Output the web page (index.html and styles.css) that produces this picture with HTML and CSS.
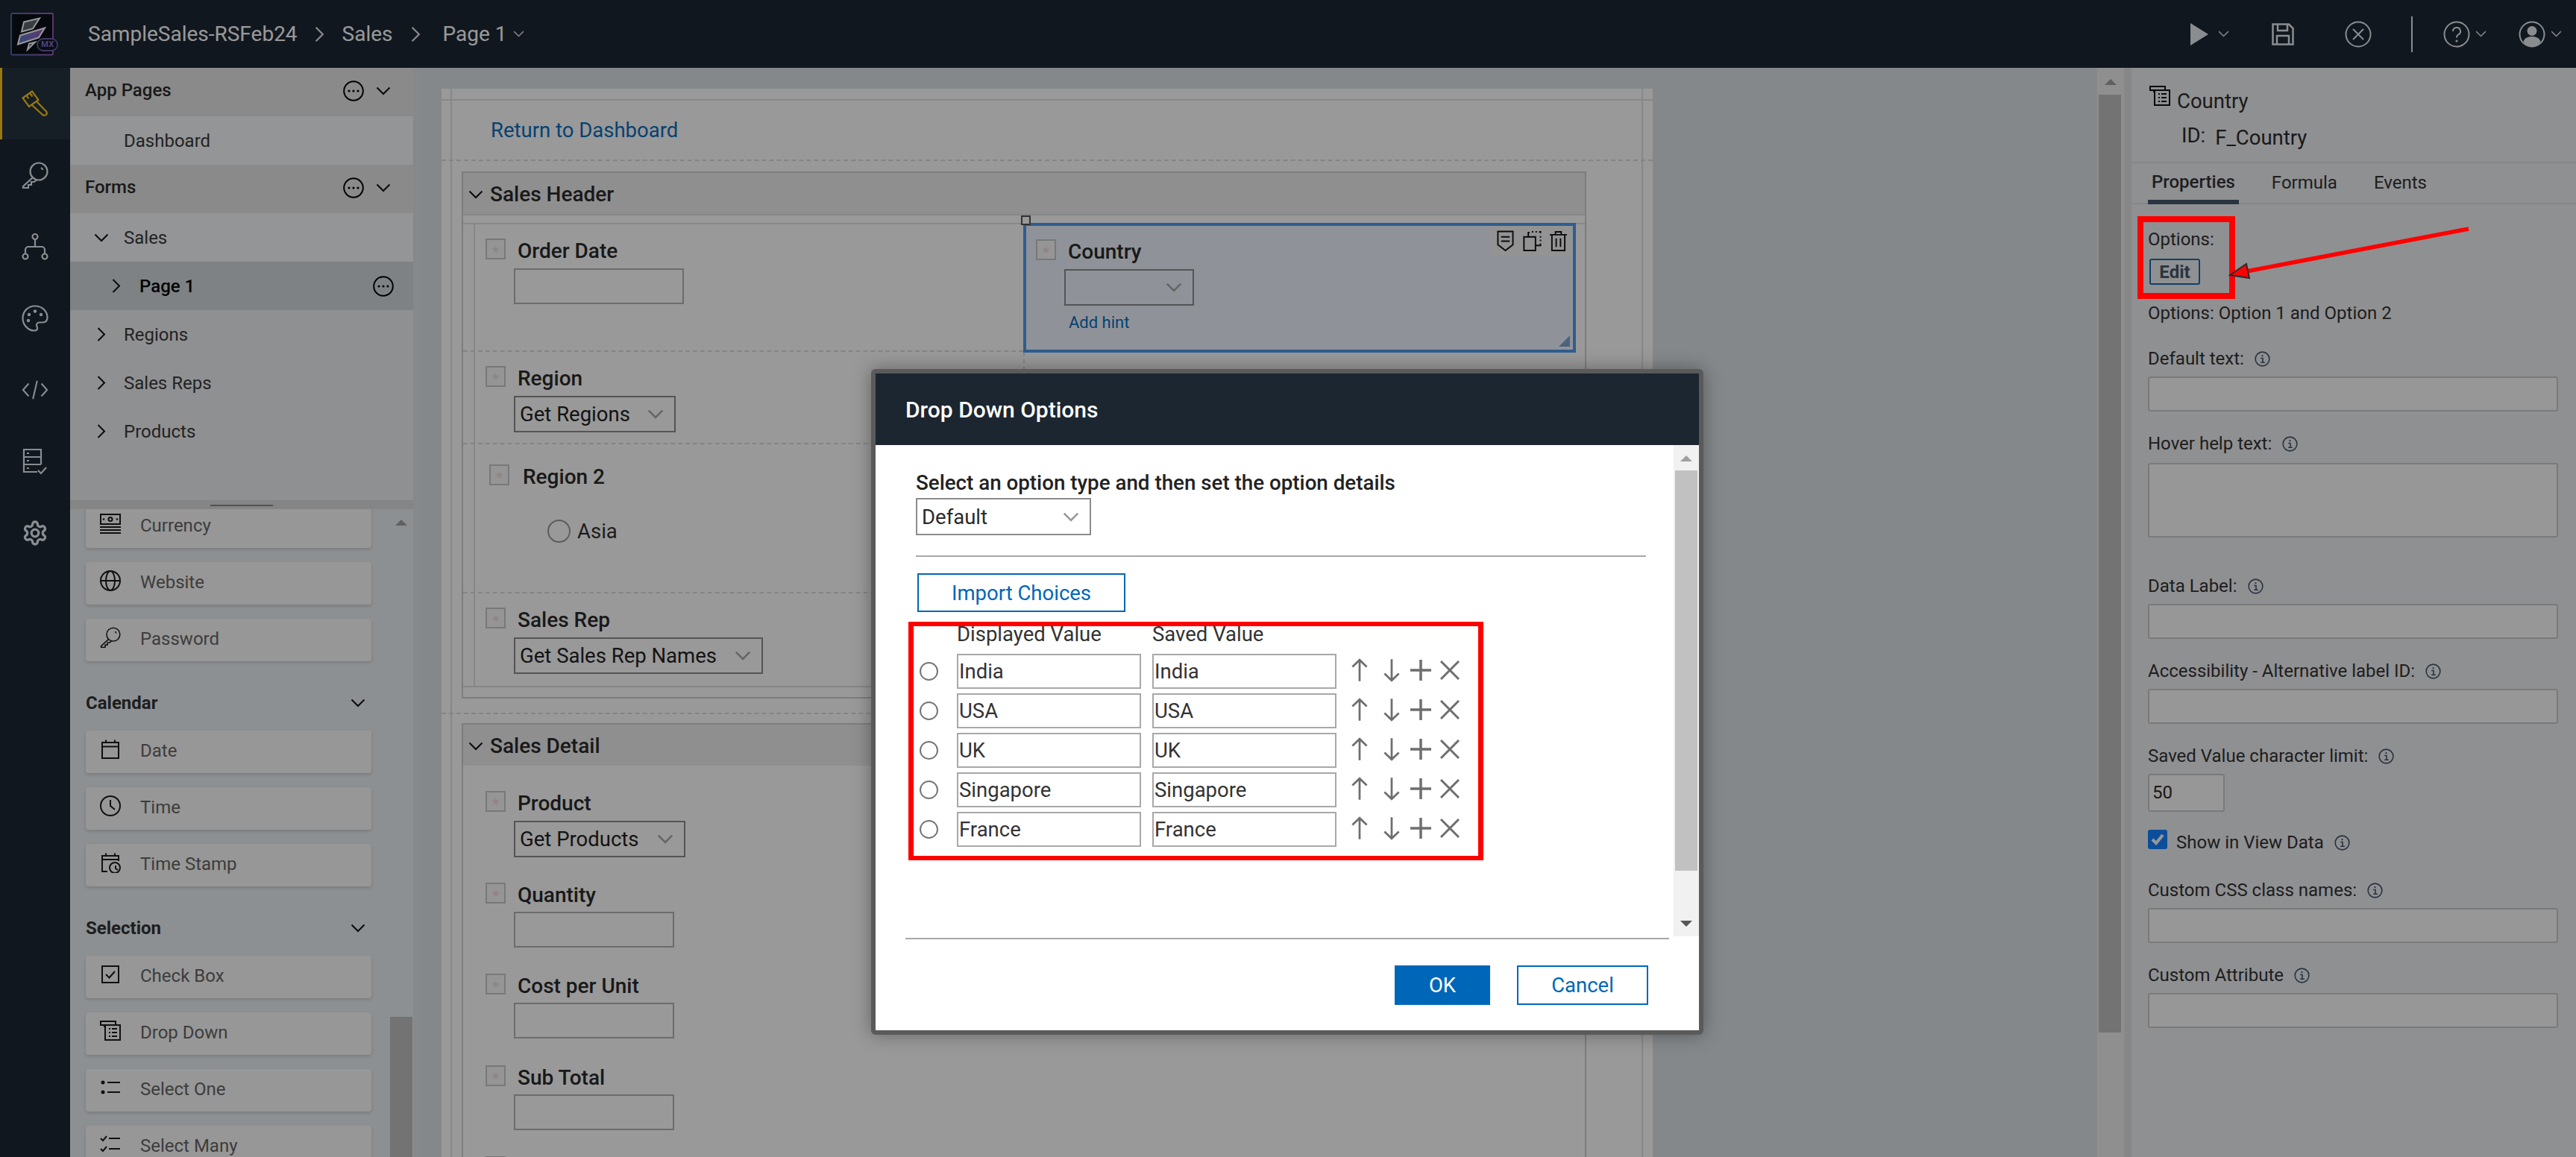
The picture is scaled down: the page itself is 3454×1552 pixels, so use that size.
FILE: index.html
```html
<!DOCTYPE html>
<html lang="en">
<head>
    <meta charset="UTF-8">
    <meta name="viewport" content="width=device-width, initial-scale=1.0">
    <title>Drop Down Options</title>
    <link rel="stylesheet" href="styles.css">
</head>
<body>

<!-- Icon sprite -->
<svg class="sprite" xmlns="http://www.w3.org/2000/svg">
    <symbol id="i-chev-down" viewBox="0 0 20 12"><path d="M1.5 1.5 L10 10 L18.5 1.5"/></symbol>
    <symbol id="i-chev-right" viewBox="0 0 12 20"><path d="M1.5 1.5 L10 10 L1.5 18.5"/></symbol>
    <symbol id="i-more" viewBox="0 0 28 28"><circle cx="14" cy="14" r="12.8"/><circle class="dot" cx="8" cy="14" r="1.6"/><circle class="dot" cx="14" cy="14" r="1.6"/><circle class="dot" cx="20" cy="14" r="1.6"/></symbol>
    <symbol id="i-brush" viewBox="0 0 36 36"><path d="M1.5 10.5 L14 1.5 L22.5 13 L10 22 Z M6.5 7 L9.5 11.5 M11 3.8 L14.5 8.5 M14 20 L27 32 C30 35.5 35 33.5 33.5 29.5 C33 28 32 27.5 31 26.5 L20 15"/></symbol>
    <symbol id="i-key" viewBox="0 0 36 36"><circle cx="23" cy="13" r="11.5"/><path d="M26 8 a3 3 0 0 1 2 3 M15 21 L2 33 V35 H9 V31 H13 V27 H17 L20 24"/></symbol>
    <symbol id="i-tree" viewBox="0 0 36 36"><circle cx="18" cy="4.5" r="3.5"/><circle cx="5" cy="31" r="3.5"/><circle cx="31" cy="31" r="3.5"/><path d="M18 8 V18 M5 27.5 V22 A4 4 0 0 1 9 18 H27 A4 4 0 0 1 31 22 V27.5"/></symbol>
    <symbol id="i-palette" viewBox="0 0 36 36"><path d="M18 1.5 C8 1.5 1.5 9 1.5 18 C1.5 27 9 34.5 17 34.5 C21 34.5 22 32 20.5 29 C19 26 21 23.5 24 23.5 H28 C32 23.5 34.5 21 34.5 16.5 C34.5 8 27 1.5 18 1.5 Z"/><circle class="dot" cx="10" cy="13" r="2.2"/><circle class="dot" cx="18" cy="8.5" r="2.2"/><circle class="dot" cx="26" cy="13" r="2.2"/><circle class="dot" cx="9" cy="21" r="2.2"/></symbol>
    <symbol id="i-code" viewBox="0 0 38 30"><path d="M10 6 L2 15 L10 24 M28 6 L36 15 L28 24 M22 2 L16 28"/></symbol>
    <symbol id="i-forms" viewBox="0 0 34 36"><path d="M20 32 H2 V2 H25 V22 M2 12 H25 M2 22 H25 M6 7 H9 M6 17 H9 M6 27 H9 M21 30 L25 34 L32 26"/></symbol>
    <symbol id="i-gear" viewBox="0 0 24 24"><path d="M12.22 2h-.44a2 2 0 0 0-2 2v.18a2 2 0 0 1-1 1.73l-.43.25a2 2 0 0 1-2 0l-.15-.08a2 2 0 0 0-2.73.73l-.22.38a2 2 0 0 0 .73 2.73l.15.1a2 2 0 0 1 1 1.72v.51a2 2 0 0 1-1 1.74l-.15.09a2 2 0 0 0-.73 2.73l.22.38a2 2 0 0 0 2.73.73l.15-.08a2 2 0 0 1 2 0l.43.25a2 2 0 0 1 1 1.73V20a2 2 0 0 0 2 2h.44a2 2 0 0 0 2-2v-.18a2 2 0 0 1 1-1.73l.43-.25a2 2 0 0 1 2 0l.15.08a2 2 0 0 0 2.73-.73l.22-.39a2 2 0 0 0-.73-2.73l-.15-.08a2 2 0 0 1-1-1.74v-.5a2 2 0 0 1 1-1.74l.15-.09a2 2 0 0 0 .73-2.73l-.22-.38a2 2 0 0 0-2.73-.73l-.15.08a2 2 0 0 1-2 0l-.43-.25a2 2 0 0 1-1-1.73V4a2 2 0 0 0-2-2z"/><circle cx="12" cy="12" r="3.2"/></symbol>
    <symbol id="i-currency" viewBox="0 0 28 28"><rect x="1" y="1" width="26" height="13"/><circle class="dot" cx="5" cy="7.5" r="1.3"/><circle class="dot" cx="23" cy="7.5" r="1.3"/><circle cx="14" cy="7.5" r="2.5"/><path d="M0 18 H28 M0 22 H28 M0 26 H28"/></symbol>
    <symbol id="i-globe" viewBox="0 0 28 28"><circle cx="14" cy="14" r="13"/><ellipse cx="14" cy="14" rx="6" ry="13"/><path d="M1 14 H27"/></symbol>
    <symbol id="i-date" viewBox="0 0 28 28"><path d="M3 5 H25 V26 H3 Z M3 10.5 H25 M8 1.5 V6 M20 1.5 V6"/></symbol>
    <symbol id="i-clock" viewBox="0 0 28 28"><circle cx="14" cy="14" r="13"/><path d="M14 6 V14 L20 19"/></symbol>
    <symbol id="i-stamp" viewBox="0 0 28 28"><path d="M10 26 H3 V5 H25 V12 M3 10 H25 M8 1.5 V6 M20 1.5 V6 M21 18 V22 L24 24"/><circle cx="20" cy="21" r="7"/></symbol>
    <symbol id="i-check" viewBox="0 0 28 28"><path d="M3 3 H25 V25 H3 Z M8 14 L12.5 18.5 L20 10"/></symbol>
    <symbol id="i-dropdown" viewBox="0 0 28 28"><path d="M1 1 H21 V6 H1 Z M6 6 V9 M7 7 V26 H27 V6 H21 M12 11 H14 M12 16 H14 M12 21 H14 M16 11 H23 M16 16 H23 M16 21 H23"/></symbol>
    <symbol id="i-one" viewBox="0 0 28 28"><circle class="dot" cx="4" cy="7" r="2.5"/><circle class="dot" cx="4" cy="20" r="2.5"/><path d="M10 7 H27 M10 20 H27"/></symbol>
    <symbol id="i-many" viewBox="0 0 28 28"><path d="M1 6 L4 9 L9 3 M1 20 L4 23 L9 17 M12 6 H27 M12 20 H27"/></symbol>
    <symbol id="i-info" viewBox="0 0 22 22"><circle cx="11" cy="11" r="9.8"/><path d="M8.5 10 H11.5 V16 M8.5 16 H14.5"/><circle class="dot" cx="11" cy="6.5" r="1.2"/></symbol>
    <symbol id="i-up" viewBox="0 0 24 34"><path d="M12 33 V2 M1.5 12 L12 2 L22.5 12"/></symbol>
    <symbol id="i-down" viewBox="0 0 24 34"><path d="M12 1 V32 M1.5 22 L12 32 L22.5 22"/></symbol>
    <symbol id="i-plus" viewBox="0 0 28 28"><path d="M14 0 V28 M0 14 H28"/></symbol>
    <symbol id="i-x" viewBox="0 0 26 26"><path d="M1 1 L25 25 M25 1 L1 25"/></symbol>
</svg>

<div class="app">

    <!-- Top bar -->
    <header class="topbar">
        <svg class="logo" viewBox="0 0 66 58" xmlns="http://www.w3.org/2000/svg">
            <defs>
                <linearGradient id="logo-line" x1="0" y1="0" x2="1" y2="0"><stop offset="0" stop-color="#4f6fb0"/><stop offset="1" stop-color="#a060c0"/></linearGradient>
                <linearGradient id="logo-band" x1="0" y1="0" x2="1" y2="0"><stop offset="0" stop-color="#6078c8"/><stop offset="1" stop-color="#9a60c0"/></linearGradient>
            </defs>
            <rect x="1" y="1" width="56" height="55.5" rx="1.5" fill="#0b0f16" stroke="url(#logo-line)" stroke-width="1.8"/>
            <path d="M18 12.5 L39 7.5 L30 21.5 L15 25.5 Z" fill="#5c6670"/>
            <path d="M13 30.5 L46 20.5 L38 33.5 L10 42.5 Z" fill="url(#logo-band)"/>
            <path d="M23 49.5 L25 41.5 L33 39.5 Z" fill="#46505a"/>
            <rect x="36" y="35" width="27" height="16" rx="8" fill="#11171f" stroke="#6c5fb0" stroke-width="1.8"/>
        </svg>
        <span class="logo-badge">MX</span>
        <span class="crumb crumb-first">SampleSales-RSFeb24</span>
        <svg class="crumb-sep crumb-sep-first"><use href="#i-chev-right"/></svg>
        <span class="crumb">Sales</span>
        <svg class="crumb-sep"><use href="#i-chev-right"/></svg>
        <span class="crumb">Page 1</span>
        <svg class="top-caret crumb-caret"><use href="#i-chev-down"/></svg>

        <div class="top-actions">
            <svg class="top-play" viewBox="0 0 26 32"><path d="M1 1 L25 16 L1 31 Z"/></svg>
            <svg class="top-caret"><use href="#i-chev-down"/></svg>
            <svg class="top-save" viewBox="0 0 30 30"><path d="M1.5 1.5 H23 L28.5 7 V28.5 H1.5 Z M8 1.5 V10 H21 V1.5 M7 28.5 V17 H23 V28.5"/></svg>
            <svg class="top-close" viewBox="0 0 36 36"><circle cx="18" cy="18" r="16.5"/><path d="M11 11 L25 25 M25 11 L11 25"/></svg>
            <span class="top-divider"></span>
            <svg class="top-help" viewBox="0 0 36 36"><circle cx="18" cy="18" r="16.5"/><path d="M13 14 A5 5 0 1 1 20 18.5 C18.5 19.5 18 20.5 18 22.5"/><circle class="dot" cx="18" cy="27" r="1.6"/></svg>
            <svg class="top-caret"><use href="#i-chev-down"/></svg>
            <svg class="top-user" viewBox="0 0 36 36"><circle cx="18" cy="18" r="16.5"/><circle class="dot" cx="18" cy="13.5" r="6.5"/><path class="dot" d="M6.5 28 C8 23 12 21 18 21 C24 21 28 23 29.5 28 C26 33 22 34.5 18 34.5 C14 34.5 10 33 6.5 28 Z"/></svg>
            <svg class="top-caret"><use href="#i-chev-down"/></svg>
        </div>
    </header>

    <div class="workspace">

        <!-- Icon rail -->
        <nav class="rail">
            <a class="rail-item rail-active"><svg class="rail-icon"><use href="#i-brush"/></svg></a>
            <a class="rail-item"><svg class="rail-icon"><use href="#i-key"/></svg></a>
            <a class="rail-item"><svg class="rail-icon"><use href="#i-tree"/></svg></a>
            <a class="rail-item"><svg class="rail-icon"><use href="#i-palette"/></svg></a>
            <a class="rail-item"><svg class="rail-icon"><use href="#i-code"/></svg></a>
            <a class="rail-item"><svg class="rail-icon"><use href="#i-forms"/></svg></a>
            <a class="rail-item"><svg class="rail-icon"><use href="#i-gear"/></svg></a>
        </nav>

        <!-- Left panel: page tree and toolbox -->
        <aside class="left-panel">
            <div class="tree">
                <div class="tree-head">
                    <span class="tree-head-text">App Pages</span>
                    <svg class="icon-more"><use href="#i-more"/></svg>
                    <svg class="icon-chev"><use href="#i-chev-down"/></svg>
                </div>
                <div class="tree-row tree-row-light"><span class="tree-label">Dashboard</span></div>
                <div class="tree-head">
                    <span class="tree-head-text">Forms</span>
                    <svg class="icon-more"><use href="#i-more"/></svg>
                    <svg class="icon-chev"><use href="#i-chev-down"/></svg>
                </div>
                <div class="tree-row tree-row-light">
                    <svg class="tree-toggle-down"><use href="#i-chev-down"/></svg>
                    <span class="tree-label">Sales</span>
                </div>
                <div class="tree-row tree-row-selected">
                    <svg class="tree-toggle tree-toggle-child"><use href="#i-chev-right"/></svg>
                    <span class="tree-label-child">Page 1</span>
                    <svg class="icon-more icon-more-row"><use href="#i-more"/></svg>
                </div>
                <div class="tree-row"><svg class="tree-toggle"><use href="#i-chev-right"/></svg><span class="tree-label">Regions</span></div>
                <div class="tree-row"><svg class="tree-toggle"><use href="#i-chev-right"/></svg><span class="tree-label">Sales Reps</span></div>
                <div class="tree-row"><svg class="tree-toggle"><use href="#i-chev-right"/></svg><span class="tree-label">Products</span></div>
            </div>
            <div class="splitter"><span class="splitter-handle"></span></div>
            <div class="toolbox">
                <div class="tool-list">
                    <div class="tool-card"><svg class="tool-icon"><use href="#i-currency"/></svg>Currency</div>
                    <div class="tool-card"><svg class="tool-icon"><use href="#i-globe"/></svg>Website</div>
                    <div class="tool-card"><svg class="tool-icon"><use href="#i-key"/></svg>Password</div>
                    <div class="tool-title">Calendar<svg class="icon-chev"><use href="#i-chev-down"/></svg></div>
                    <div class="tool-card"><svg class="tool-icon"><use href="#i-date"/></svg>Date</div>
                    <div class="tool-card"><svg class="tool-icon"><use href="#i-clock"/></svg>Time</div>
                    <div class="tool-card"><svg class="tool-icon"><use href="#i-stamp"/></svg>Time Stamp</div>
                    <div class="tool-title">Selection<svg class="icon-chev"><use href="#i-chev-down"/></svg></div>
                    <div class="tool-card"><svg class="tool-icon"><use href="#i-check"/></svg>Check Box</div>
                    <div class="tool-card"><svg class="tool-icon"><use href="#i-dropdown"/></svg>Drop Down</div>
                    <div class="tool-card"><svg class="tool-icon"><use href="#i-one"/></svg>Select One</div>
                    <div class="tool-card"><svg class="tool-icon"><use href="#i-many"/></svg>Select Many</div>
                </div>
                <div class="tool-scroll">
                    <span class="arrow-up"></span>
                    <span class="tool-thumb"></span>
                </div>
            </div>
        </aside>

        <!-- Form canvas -->
        <main class="canvas">
            <div class="page">
                <div class="page-top"></div>
                <div class="page-link-row"><a class="page-link">Return to Dashboard</a></div>

                <section class="section">
                    <div class="section-head"><svg class="icon-chev"><use href="#i-chev-down"/></svg>Sales Header</div>
                    <div class="section-strip"></div>
                    <div class="header-grid">
                        <div class="cell">
                            <div class="field-head"><span class="req">★</span><span class="field-label">Order Date</span></div>
                            <div class="input-box input-order"></div>
                        </div>
                        <div class="cell cell-selected">
                            <span class="cell-handle"></span>
                            <div class="cell-tools">
                                <svg class="cell-tool" viewBox="0 0 24 30"><path d="M1.5 1.5 H22.5 V20 L12 28 L1.5 20 Z M6 9 H18 M6 15 H18"/></svg>
                                <svg class="cell-tool cell-tool-wide" viewBox="0 0 28 30"><path d="M3 9 H19 V28 H3 Z M9 9 V3 H11 M14 2 H16 M19 2 H21 M24 2 H26 V4 M26 8 V10 M26 13 V15 M26 18 V21 H19"/></svg>
                                <svg class="cell-tool" viewBox="0 0 24 30"><path d="M0 6 H24 M8 6 V2 H16 V6 M3 6 V28 H21 V6 M9 11 V23 M15 11 V23"/></svg>
                            </div>
                            <div class="field-head"><span class="req">★</span><span class="field-label">Country</span></div>
                            <div class="select-box select-country"><svg class="select-chev"><use href="#i-chev-down"/></svg></div>
                            <a class="add-hint">Add hint</a>
                            <span class="cell-resize"></span>
                        </div>
                        <div class="cell">
                            <div class="field-head"><span class="req">★</span><span class="field-label">Region</span></div>
                            <div class="select-box select-region">Get Regions<svg class="select-chev"><use href="#i-chev-down"/></svg></div>
                        </div>
                        <div class="cell cell-side"></div>
                        <div class="cell cell-region2">
                            <div class="field-head field-head-wide"><span class="req">★</span><span class="field-label">Region 2</span></div>
                            <div class="radio-line"><span class="radio radio-big"></span>Asia</div>
                        </div>
                        <div class="cell cell-side"></div>
                        <div class="cell cell-last">
                            <div class="field-head"><span class="req">★</span><span class="field-label">Sales Rep</span></div>
                            <div class="select-box select-rep">Get Sales Rep Names<svg class="select-chev"><use href="#i-chev-down"/></svg></div>
                        </div>
                        <div class="cell cell-side cell-last"></div>
                    </div>
                </section>

                <div class="page-divider"></div>

                <section class="section section-detail">
                    <div class="section-head"><svg class="icon-chev"><use href="#i-chev-down"/></svg>Sales Detail</div>
                    <div class="detail-rows">
                        <div class="detail-row">
                            <div class="field-head"><span class="req">★</span><span class="field-label">Product</span></div>
                            <div class="select-box select-product">Get Products<svg class="select-chev"><use href="#i-chev-down"/></svg></div>
                        </div>
                        <div class="detail-row">
                            <div class="field-head"><span class="req">★</span><span class="field-label">Quantity</span></div>
                            <div class="input-box input-detail"></div>
                        </div>
                        <div class="detail-row">
                            <div class="field-head"><span class="req">★</span><span class="field-label">Cost per Unit</span></div>
                            <div class="input-box input-detail"></div>
                        </div>
                        <div class="detail-row">
                            <div class="field-head"><span class="req">★</span><span class="field-label">Sub Total</span></div>
                            <div class="input-box input-detail"></div>
                        </div>
                        <div class="detail-row">
                            <div class="field-head"><span class="req"></span></div>
                        </div>
                    </div>
                </section>
            </div>
        </main>

        <div class="canvas-scroll">
            <span class="arrow-up"></span>
            <span class="canvas-thumb"></span>
        </div>
        <div class="gutter"></div>

        <!-- Properties panel -->
        <aside class="props">
            <div class="props-head">
                <div class="props-title"><svg class="props-icon"><use href="#i-dropdown"/></svg><span class="props-name">Country</span></div>
                <div class="props-id"><span>ID:</span><span class="props-id-value">F_Country</span></div>
            </div>
            <div class="tabs">
                <span class="tab tab-active">Properties</span>
                <span class="tab">Formula</span>
                <span class="tab">Events</span>
            </div>
            <div class="props-body">
                <div class="prop-label prop-first">Options:</div>
                <button class="edit-btn">Edit</button>
                <div class="prop-note">Options: Option 1 and Option 2</div>

                <div class="prop-label prop-gap-first">Default text:<svg class="info"><use href="#i-info"/></svg></div>
                <div class="prop-input"></div>
                <div class="prop-label">Hover help text:<svg class="info"><use href="#i-info"/></svg></div>
                <div class="prop-input prop-textarea"></div>
                <div class="prop-label prop-gap-big">Data Label:<svg class="info"><use href="#i-info"/></svg></div>
                <div class="prop-input"></div>
                <div class="prop-label">Accessibility - Alternative label ID:<svg class="info"><use href="#i-info"/></svg></div>
                <div class="prop-input"></div>
                <div class="prop-label">Saved Value character limit:<svg class="info"><use href="#i-info"/></svg></div>
                <div class="prop-input prop-number">50</div>
                <div class="prop-check">
                    <span class="check-on"><svg viewBox="0 0 26 26"><path d="M6 13 L11 18 L20 7"/></svg></span>
                    <span class="prop-check-text">Show in View Data</span>
                    <svg class="info"><use href="#i-info"/></svg>
                </div>
                <div class="prop-label prop-gap-css">Custom CSS class names:<svg class="info"><use href="#i-info"/></svg></div>
                <div class="prop-input"></div>
                <div class="prop-label">Custom Attribute<svg class="info"><use href="#i-info"/></svg></div>
                <div class="prop-input"></div>
            </div>
        </aside>
    </div>

    <div class="scrim"></div>

    <!-- Modal dialog -->
    <div class="dialog" role="dialog">
        <div class="dialog-head">Drop Down Options</div>
        <div class="dialog-main">
            <div class="dialog-body">
                <div class="dialog-label">Select an option type and then set the option details</div>
                <div class="dialog-select">Default<svg class="select-chev"><use href="#i-chev-down"/></svg></div>
                <div class="dialog-rule"></div>
                <button class="import-btn">Import Choices</button>
                <div class="opt-grid">
                    <span></span><span class="opt-head">Displayed Value</span><span class="opt-head">Saved Value</span><span></span>

                    <span class="radio"></span><div class="opt-input">India</div><div class="opt-input">India</div>
                    <div class="opt-tools"><svg class="opt-arrow"><use href="#i-up"/></svg><svg class="opt-arrow opt-arrow-down"><use href="#i-down"/></svg><svg class="opt-plus"><use href="#i-plus"/></svg><svg class="opt-x"><use href="#i-x"/></svg></div>

                    <span class="radio"></span><div class="opt-input">USA</div><div class="opt-input">USA</div>
                    <div class="opt-tools"><svg class="opt-arrow"><use href="#i-up"/></svg><svg class="opt-arrow opt-arrow-down"><use href="#i-down"/></svg><svg class="opt-plus"><use href="#i-plus"/></svg><svg class="opt-x"><use href="#i-x"/></svg></div>

                    <span class="radio"></span><div class="opt-input">UK</div><div class="opt-input">UK</div>
                    <div class="opt-tools"><svg class="opt-arrow"><use href="#i-up"/></svg><svg class="opt-arrow opt-arrow-down"><use href="#i-down"/></svg><svg class="opt-plus"><use href="#i-plus"/></svg><svg class="opt-x"><use href="#i-x"/></svg></div>

                    <span class="radio"></span><div class="opt-input">Singapore</div><div class="opt-input">Singapore</div>
                    <div class="opt-tools"><svg class="opt-arrow"><use href="#i-up"/></svg><svg class="opt-arrow opt-arrow-down"><use href="#i-down"/></svg><svg class="opt-plus"><use href="#i-plus"/></svg><svg class="opt-x"><use href="#i-x"/></svg></div>

                    <span class="radio"></span><div class="opt-input">France</div><div class="opt-input">France</div>
                    <div class="opt-tools"><svg class="opt-arrow"><use href="#i-up"/></svg><svg class="opt-arrow opt-arrow-down"><use href="#i-down"/></svg><svg class="opt-plus"><use href="#i-plus"/></svg><svg class="opt-x"><use href="#i-x"/></svg></div>
                </div>
            </div>
            <div class="dialog-scroll">
                <span class="arrow-up arrow-light"></span>
                <span class="dialog-thumb"></span>
                <span class="arrow-down"></span>
            </div>
        </div>
        <div class="dialog-foot">
            <button class="btn-ok">OK</button>
            <button class="btn-cancel">Cancel</button>
        </div>
    </div>

    <!-- Red annotations drawn over the screenshot -->
    <div class="mark mark-options"></div>
    <div class="mark mark-rows"></div>
    <svg class="mark-arrow" viewBox="0 0 340 80" xmlns="http://www.w3.org/2000/svg">
        <path d="M322 3 L24 60" stroke="#ff0000" stroke-width="5.5" fill="none"/>
        <path d="M2 65 L24 50 L28 69 Z" fill="#ff0000"/>
    </svg>
</div>

</body>
</html>
```

FILE: styles.css
```css
* {
    box-sizing: border-box;
}
html, body {
    margin: 0;
    padding: 0;
}
body {
    font-family: Roboto, Arial, sans-serif;
    font-size: 24px;
    color: #2b2b2b;
    background-color: #dce3e6;
}
button {
    font-family: inherit;
    cursor: pointer;
}
svg {
    display: block;
    flex: none;
    fill: none;
    stroke: currentColor;
    stroke-width: 2;
}
svg .dot,
symbol .dot {
    fill: currentColor;
    stroke: none;
}
.sprite {
    display: none;
}
.app {
    position: relative;
    width: 3454px;
    height: 1552px;
    overflow: hidden;
}

/* Top bar */
.topbar {
    display: flex;
    align-items: center;
    height: 91px;
    padding-left: 14px;
    background-color: #1c2735;
    color: #ffffff;
    position: relative;
}
.logo {
    width: 66px;
    height: 58px;
}
.logo-badge {
    position: absolute;
    left: 50px;
    top: 52px;
    width: 28px;
    font-size: 11px;
    line-height: 16px;
    font-weight: 700;
    letter-spacing: 0.5px;
    text-align: center;
    color: #8070d8;
}
.crumb {
    font-size: 28px;
}
.crumb-first {
    margin-left: 38px;
}
.crumb-sep {
    width: 13px;
    height: 24px;
    margin: 0 30px 0 24px;
    color: #e8e8e8;
}
.crumb-sep-first {
    margin: 0 24px 0 23px;
}
.top-caret {
    width: 15px;
    height: 9px;
    color: #dddddd;
    stroke-width: 2;
}
.crumb-caret {
    margin-left: 8px;
}
.top-actions {
    display: flex;
    align-items: center;
    margin-left: auto;
    padding-right: 19px;
    color: #e6ebf0;
}
.top-play {
    width: 26px;
    height: 32px;
    fill: currentColor;
    stroke: none;
    margin-right: 12px;
}
.top-save {
    width: 30px;
    height: 30px;
    margin-left: 57px;
    stroke-width: 2.5;
}
.top-close {
    width: 36px;
    height: 36px;
    margin-left: 68px;
}
.top-divider {
    width: 2px;
    height: 48px;
    margin: 0 41px 0 53px;
    background-color: #e6ebf0;
}
.top-help {
    width: 36px;
    height: 36px;
    margin-right: 7px;
}
.top-user {
    width: 36px;
    height: 36px;
    margin: 0 7px 0 43px;
}

.workspace {
    display: flex;
    height: 1461px;
}

/* Icon rail */
.rail {
    width: 94px;
    flex: none;
    background-color: #1c2735;
    color: #e6ebf0;
}
.rail-item {
    display: flex;
    align-items: center;
    justify-content: center;
    height: 96px;
}
.rail-active {
    background-color: #26343f;
    border-left: 3px solid #ffc81e;
    padding-right: 3px;
    color: #ffc81e;
}
.rail-icon {
    width: 36px;
    height: 36px;
    stroke-width: 2.2;
}

/* Left panel */
.left-panel {
    width: 471px;
    flex: none;
    display: flex;
    flex-direction: column;
    background-color: #edf0f3;
    border-right: 11px solid #e2e3e5;
}
.tree {
    height: 580px;
    background-color: #eff1f3;
}
.tree-head {
    display: flex;
    align-items: center;
    height: 65px;
    padding: 0 0 3px 20px;
    background-color: #e6e6e6;
    font-weight: 500;
}
.tree-head-text {
    padding-bottom: 3px;
}
.tree-row {
    display: flex;
    align-items: center;
    position: relative;
    height: 65px;
    color: #3a3a3a;
}
.tree-row-light {
    background-color: #f5f8fb;
}
.tree-row-selected {
    background-color: #d2d9de;
    color: #000000;
    font-weight: 500;
}
.tree-label {
    position: absolute;
    left: 72px;
}
.tree-label-child {
    position: absolute;
    left: 93px;
}
.tree-toggle {
    width: 12px;
    height: 21px;
    margin-left: 36px;
    color: #111111;
}
.tree-toggle-child {
    margin-left: 56px;
}
.tree-toggle-down {
    width: 20px;
    height: 12px;
    margin-left: 32px;
    color: #111111;
}
.icon-more {
    width: 28px;
    height: 28px;
    margin-left: auto;
    color: #000000;
}
.icon-more-row {
    margin-right: 26px;
}
.icon-chev {
    width: 20px;
    height: 12px;
    color: #111111;
}
.tree-head .icon-chev {
    margin: 0 30px 0 16px;
}
.splitter {
    display: flex;
    justify-content: center;
    height: 12px;
    padding-top: 6px;
    background-color: #dedede;
}
.splitter-handle {
    width: 84px;
    height: 2px;
    background-color: #888888;
}
.toolbox {
    flex: 1;
    display: flex;
    min-height: 0;
    background-color: #ecf0f4;
    overflow: hidden;
}
.tool-list {
    width: 428px;
    flex: none;
    margin-top: -5px;
    padding-left: 21px;
}
.tool-card {
    display: flex;
    align-items: center;
    gap: 26px;
    width: 383px;
    height: 57px;
    margin-bottom: 19px;
    padding: 0 0 4px 19px;
    background-color: #fcfcfc;
    border-radius: 4px;
    box-shadow: 0 2px 5px rgba(0, 0, 0, 0.16);
    color: #666666;
}
.tool-icon {
    width: 28px;
    height: 28px;
    margin-top: -4px;
    color: #1c1c1c;
}
.tool-title {
    display: flex;
    align-items: center;
    justify-content: space-between;
    width: 383px;
    height: 74px;
    padding-right: 8px;
    font-weight: 700;
    color: #333333;
}
.tool-scroll {
    flex: 1;
    display: flex;
    flex-direction: column;
    align-items: center;
}
.tool-scroll .arrow-up {
    margin-top: 14px;
}
.tool-thumb {
    width: 30px;
    height: 188px;
    margin-top: auto;
    background-color: #c0c0c0;
}
.arrow-up {
    width: 0;
    height: 0;
    border-left: 8px solid transparent;
    border-right: 8px solid transparent;
    border-bottom: 8px solid #a0a0a0;
}
.arrow-down {
    width: 0;
    height: 0;
    border-left: 8px solid transparent;
    border-right: 8px solid transparent;
    border-top: 8px solid #555555;
}

/* Canvas */
.canvas {
    width: 2247px;
    flex: none;
    padding: 28px 0 0 27px;
    background-color: #dce3e6;
    overflow: hidden;
}
.page {
    width: 1624px;
    min-height: 1500px;
    background-color: #ffffff;
    background-image: linear-gradient(#e2e2e2, #e2e2e2), linear-gradient(#e2e2e2, #e2e2e2);
    background-size: 2px 100%;
    background-position: 12px 0, calc(100% - 13px) 0;
    background-repeat: no-repeat;
}
.page-top {
    height: 16px;
    border-bottom: 2px solid #e2e2e2;
}
.page-link-row {
    display: flex;
    align-items: center;
    height: 81px;
    padding-left: 66px;
    border-bottom: 2px dashed #dddddd;
}
.page-link {
    font-size: 27.5px;
    color: #0a6ebd;
}
.section {
    width: 1508px;
    margin: 14px 0 0 27px;
    padding-bottom: 13px;
    background-color: #ffffff;
    border: 2px solid #d0d0d0;
}
.section-detail {
    margin-top: 12px;
    padding-bottom: 0;
    border-bottom: none;
}
.section-head {
    display: flex;
    align-items: center;
    gap: 9px;
    height: 55px;
    padding: 2px 0 0 7px;
    background-color: #eeeeee;
    font-size: 28px;
    font-weight: 500;
}
.section-strip {
    height: 14px;
    border-top: 2px solid #e0e0e0;
    border-bottom: 2px solid #e0e0e0;
}
.header-grid {
    display: grid;
    grid-template-columns: 751px 741px;
    grid-template-rows: 171px 124px 200px 126px;
    background-image: linear-gradient(#e2e2e2, #e2e2e2);
    background-size: 2px 100%;
    background-position: 14px 0;
    background-repeat: no-repeat;
}
.cell {
    padding: 19px 0 0 30px;
    border-bottom: 2px dashed #dddddd;
}
.cell-side {
    border-left: 2px dashed #dddddd;
    padding: 0;
}
.cell-last {
    border-bottom: 2px solid #e0e0e0;
}
.cell-region2 {
    padding: 27px 0 0 35px;
}
.field-head {
    display: flex;
    gap: 16px;
    height: 28px;
}
.field-head-wide {
    gap: 18px;
}
.req {
    display: flex;
    align-items: center;
    justify-content: center;
    width: 27px;
    height: 28px;
    background-color: #f8f8f8;
    border: 2px solid #c8c8c8;
    font-family: "DejaVu Sans", sans-serif;
    font-size: 14px;
    color: #f2dde0;
}
.field-label {
    padding-top: 2px;
    font-size: 28px;
    line-height: 30px;
    font-weight: 500;
}
.input-box {
    height: 48px;
    margin: 12px 0 0 38px;
    border: 2px solid #b4b4b4;
    background-color: #ffffff;
}
.input-order {
    width: 228px;
}
.input-detail {
    width: 215px;
    margin-top: 11px;
}
.select-box {
    display: flex;
    align-items: center;
    justify-content: space-between;
    height: 49px;
    margin: 12px 0 0 38px;
    padding: 0 14px 0 6px;
    font-size: 27.5px;
    color: #222222;
    background-color: #ffffff;
    border: 2px solid #8c8c8c;
}
.select-chev {
    width: 22px;
    height: 13px;
    color: #aaaaaa;
    stroke-width: 2.5;
}
.select-region {
    width: 217px;
}
.select-rep {
    width: 334px;
}
.select-product {
    width: 230px;
}
.select-country {
    width: 174px;
    justify-content: flex-end;
    background-color: transparent;
}
.radio-line {
    display: flex;
    align-items: center;
    gap: 9px;
    margin: 45px 0 0 78px;
    font-size: 27.5px;
    color: #333333;
}
.radio {
    width: 25px;
    height: 25px;
    border: 2px solid #767676;
    border-radius: 50%;
    background-color: #ffffff;
}
.radio-big {
    width: 31px;
    height: 31px;
    border-color: #9a9a9a;
    background-color: transparent;
}

/* Selected field */
.cell-selected {
    position: relative;
    margin: -2px 0 -1px;
    padding: 18px 0 0 13px;
    background-color: #eef5ff;
    border: 4px solid #4f9bef;
}
.cell-handle {
    position: absolute;
    left: -7px;
    top: -14px;
    width: 13px;
    height: 13px;
    background-color: #ffffff;
    border: 2px solid #555555;
}
.cell-tools {
    position: absolute;
    right: 1px;
    top: 0;
    display: flex;
    align-items: center;
    gap: 10px;
    height: 40px;
    padding: 0 7px 0 9px;
    background-color: #f6f6f6;
    color: #111111;
}
.cell-tool {
    width: 23px;
    height: 29px;
}
.cell-tool-wide {
    width: 28px;
}
.add-hint {
    display: block;
    margin: 10px 0 0 44px;
    font-size: 22px;
    line-height: 26px;
    color: #0a6ebd;
}
.cell-resize {
    position: absolute;
    right: 4px;
    bottom: 4px;
    width: 0;
    height: 0;
    border-left: 15px solid transparent;
    border-bottom: 15px solid #80a6d0;
}
.page-divider {
    margin-top: 19px;
    border-top: 2px dashed #dddddd;
}
.detail-rows {
    padding: 34px 0 0 30px;
}
.detail-row {
    height: 122.5px;
}

/* Canvas scrollbar and gutter */
.canvas-scroll {
    width: 36px;
    flex: none;
    display: flex;
    flex-direction: column;
    align-items: center;
    background-color: #eeeeee;
}
.canvas-scroll .arrow-up {
    margin-top: 15px;
}
.canvas-thumb {
    width: 30px;
    height: 1258px;
    margin-top: 13px;
    margin-left: -2px;
    background-color: #c0c0c0;
}
.gutter {
    width: 10px;
    flex: none;
    background-color: #e1e1e1;
}

/* Properties panel */
.props {
    flex: 1;
    background-color: #eef0f3;
}
.props-head {
    height: 128px;
    padding: 24px 0 0 24px;
    border-bottom: 2px solid #e0e0e0;
    font-size: 27.5px;
}
.props-title {
    display: flex;
    gap: 9px;
    line-height: 32px;
    color: #2e2e2e;
}
.props-name {
    margin-top: 5px;
}
.props-icon {
    width: 28px;
    height: 28px;
    color: #111111;
}
.props-id {
    display: flex;
    gap: 13px;
    margin: 14px 0 0 43px;
    line-height: 32px;
}
.props-id-value {
    margin-top: 3px;
}
.tabs {
    display: flex;
    height: 55px;
    padding-left: 22px;
    gap: 39px;
    border-bottom: 2px solid #e0e0e0;
}
.tab {
    display: flex;
    align-items: center;
    height: 55px;
    padding: 0 5px 4px;
    color: #333333;
}
.tab-active {
    font-weight: 500;
    border-bottom: 6px solid #46586c;
    padding-bottom: 0;
}
.props-body {
    padding: 0 24px 0 22px;
}
.prop-label {
    display: flex;
    align-items: center;
    height: 30px;
    margin-top: 28px;
    color: #333333;
}
.prop-first {
    margin-top: 32px;
}
.prop-gap-first {
    margin-top: 31px;
}
.prop-gap-big {
    margin-top: 50px;
}
.prop-gap-css {
    margin-top: 32px;
}
.info {
    width: 21px;
    height: 21px;
    margin-left: 14px;
    color: #46586c;
    stroke-width: 1.7;
}
.edit-btn {
    display: block;
    width: 68px;
    height: 35px;
    margin: 11px 0 0 2px;
    padding: 0;
    font-size: 24px;
    font-weight: 700;
    color: #46586c;
    background-color: transparent;
    border: 2px solid #1f6aa8;
    border-radius: 3px;
}
.prop-note {
    height: 30px;
    line-height: 30px;
    margin-top: 23px;
    color: #333333;
}
.prop-input {
    height: 47px;
    margin-top: 9px;
    background-color: #fcfcfc;
    border: 2px solid #cccccc;
    border-radius: 3px;
}
.prop-textarea {
    height: 100px;
    margin-top: 11px;
}
.prop-number {
    width: 103px;
    height: 51px;
    padding: 9px 0 0 4px;
    font-size: 24px;
}
.prop-check {
    display: flex;
    align-items: center;
    margin-top: 24px;
    height: 34px;
}
.check-on {
    width: 26px;
    height: 26px;
    margin-top: -8px;
    background-color: #1583ff;
    border-radius: 3px;
    color: #ffffff;
}
.check-on svg {
    width: 26px;
    height: 26px;
    stroke-width: 4;
}
.prop-check-text {
    margin-left: 12px;
    color: #333333;
}

/* Dialog overlay */
.scrim {
    position: absolute;
    left: 0;
    top: 0;
    width: 100%;
    height: 100%;
    background-color: rgba(0, 0, 0, 0.4);
    z-index: 10;
}
.dialog {
    position: absolute;
    left: 1168px;
    top: 495px;
    width: 1116px;
    height: 893px;
    display: flex;
    flex-direction: column;
    background-color: #ffffff;
    border: 6px solid #5a5a5a;
    border-radius: 6px;
    box-shadow: 0 0 24px rgba(0, 0, 0, 0.35);
    z-index: 20;
}
.dialog-head {
    display: flex;
    align-items: center;
    height: 96px;
    padding-left: 40px;
    flex: none;
    background-color: #1c2631;
    color: #ffffff;
    font-size: 30px;
    font-weight: 500;
}
.dialog-main {
    display: flex;
    height: 659px;
    flex: none;
}
.dialog-body {
    flex: 1;
    padding: 34px 0 0 54px;
}
.dialog-label {
    font-size: 27.75px;
    line-height: 34px;
    font-weight: 500;
    color: #222222;
}
.dialog-select {
    display: flex;
    align-items: center;
    justify-content: space-between;
    width: 235px;
    height: 50px;
    margin-top: 3px;
    padding: 0 14px 0 6px;
    font-size: 27.5px;
    border: 2px solid #8c8c8c;
}
.dialog-select .select-chev {
    color: #999999;
}
.dialog-rule {
    width: 979px;
    height: 2px;
    margin-top: 27px;
    background-color: #a8a8a8;
}
.import-btn {
    display: block;
    width: 279px;
    height: 52px;
    margin: 22px 0 0 2px;
    padding: 0;
    font-size: 27.5px;
    color: #0067b8;
    background-color: #ffffff;
    border: 2px solid #0067b8;
}
.opt-grid {
    display: grid;
    grid-template-columns: 35px 247px 247px auto;
    grid-template-rows: 34px;
    grid-auto-rows: 47px;
    justify-content: start;
    align-items: center;
    column-gap: 15px;
    row-gap: 6px;
    margin: 16px 0 0 5px;
    font-size: 27.5px;
}
.opt-head {
    align-self: start;
    line-height: 28px;
    color: #333333;
}
.opt-input {
    height: 47px;
    line-height: 43px;
    padding-left: 1px;
    color: #333333;
    border: 2px solid #a8a8a8;
}
.opt-tools {
    display: flex;
    align-items: center;
    margin: -4px 0 0 5px;
    color: #6e6e6e;
}
.opt-arrow {
    width: 22px;
    height: 32px;
    stroke-width: 3;
}
.opt-arrow-down {
    margin-left: 21px;
}
.opt-plus {
    width: 28px;
    height: 28px;
    margin-left: 14px;
    stroke-width: 3.5;
}
.opt-x {
    width: 26px;
    height: 26px;
    margin-left: 12px;
    stroke-width: 3;
}
.dialog-scroll {
    width: 34px;
    flex: none;
    display: flex;
    flex-direction: column;
    align-items: center;
    background-color: #f1f1f1;
}
.dialog-scroll .arrow-up {
    margin-top: 14px;
}
.dialog-thumb {
    width: 30px;
    height: 537px;
    margin-top: 12px;
    background-color: #c1c1c1;
}
.dialog-scroll .arrow-down {
    margin-top: 67px;
}
.dialog-foot {
    display: flex;
    align-items: center;
    flex: 1;
    margin: 2px 40px 0;
    padding: 0 28px 0 656px;
    border-top: 2px solid #a8a8a8;
}
.btn-ok {
    width: 128px;
    height: 53px;
    font-size: 27.5px;
    color: #ffffff;
    background-color: #0067b8;
    border: none;
}
.btn-cancel {
    width: 176px;
    height: 53px;
    margin-left: 36px;
    font-size: 27.5px;
    color: #0067b8;
    background-color: #ffffff;
    border: 2px solid #0067b8;
}

/* Annotations */
.mark {
    position: absolute;
    border: 7px solid #ff0000;
    z-index: 30;
}
.mark-options {
    left: 2866px;
    top: 290px;
    width: 131px;
    height: 111px;
    border-width: 8px;
}
.mark-rows {
    left: 1218px;
    top: 834px;
    width: 771px;
    height: 320px;
    border-width: 6px 7px;
}
.mark-arrow {
    position: absolute;
    left: 2988px;
    top: 304px;
    width: 340px;
    height: 80px;
    z-index: 30;
}
```
